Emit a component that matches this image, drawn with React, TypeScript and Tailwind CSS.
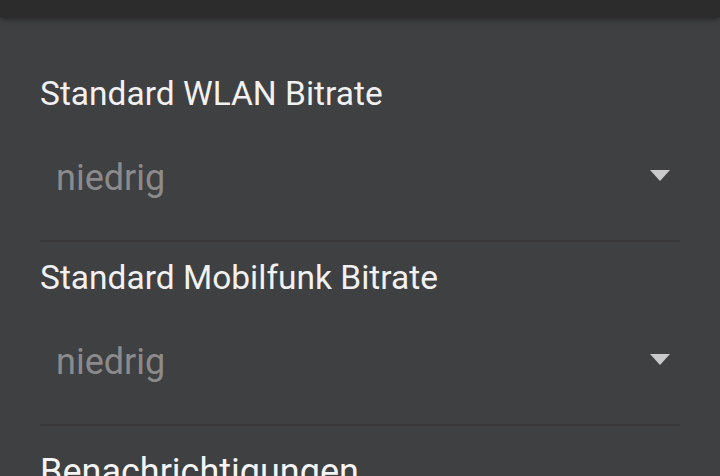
export default function App() {
  const rows = [
    { label: "Standard WLAN Bitrate", value: "niedrig" },
    { label: "Standard Mobilfunk Bitrate", value: "niedrig" },
  ];

  return (
    <div className="h-[476px] w-[720px] overflow-hidden bg-[#3f4042] font-['Roboto',sans-serif]">
      <div className="relative z-10 h-[17px] bg-[#2c2c2c] shadow-[0_2px_6px_rgba(0,0,0,0.45)]" />
      <div className="px-10 pt-[41px]">
        {rows.map((row) => (
          <div key={row.label} className="border-b-2 border-[#383839] pt-4">
            <div className="text-[33.5px] leading-[40px] text-[#f1f1f1]">{row.label}</div>
            <div className="flex h-[126px] items-center justify-between pl-4 pr-2.5 pt-[2px]">
              <span className="text-[36px] leading-[44px] text-[#8b8b8b]">{row.value}</span>
              <svg width="20" height="12" viewBox="0 0 20 12" className="mt-[-4px]">
                <path d="M0 0 L20 0 L10 11 Z" fill="#c9c9c9" />
              </svg>
            </div>
          </div>
        ))}
        <div className="pt-[26px] text-[36px] leading-[40px] text-[#f4f4f4]">Benachrichtigungen</div>
      </div>
    </div>
  );
}
